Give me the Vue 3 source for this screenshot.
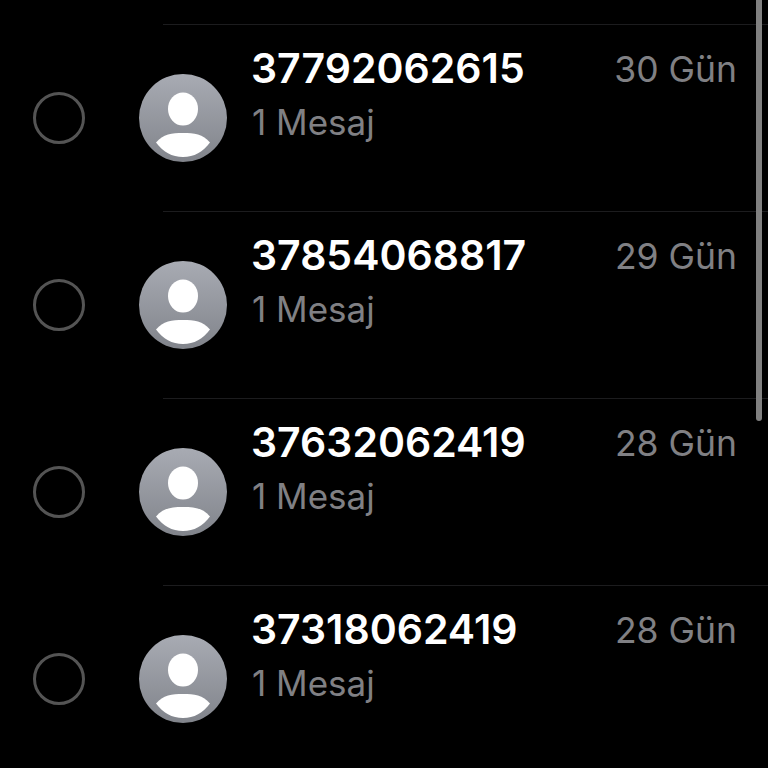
<template>
  <div class="screen">
    <div class="list">
      <div v-for="item in items" :key="item.id" class="row">
        <div class="select">
          <span class="radio"></span>
        </div>
        <div class="content">
          <div class="avatar-col">
            <svg class="avatar" viewBox="0 0 88 88">
              <defs>
                <linearGradient id="avatarBg" x1="0" y1="0" x2="0" y2="1">
                  <stop offset="0" stop-color="#a8abb3" />
                  <stop offset="1" stop-color="#81848b" />
                </linearGradient>
              </defs>
              <circle cx="44" cy="44" r="44" fill="url(#avatarBg)" />
              <ellipse cx="44" cy="35" rx="15" ry="16.5" fill="#fff" />
              <path d="M17 68.5C24 60 33 59 44 59C55 59 64 60 71 68.5C64 78 55 83 44 83C33 83 24 78 17 68.5Z" fill="#fff" />
            </svg>
          </div>
          <div class="texts">
            <div class="top">
              <span class="number">{{ item.number }}</span>
              <span class="age">{{ item.age }}</span>
            </div>
            <div class="count">1 Mesaj</div>
          </div>
        </div>
      </div>
    </div>
    <div class="scrollbar"></div>
  </div>
</template>

<script setup>
const items = [
  { id: 1, number: '37792062615', age: '30 Gün' },
  { id: 2, number: '37854068817', age: '29 Gün' },
  { id: 3, number: '37632062419', age: '28 Gün' },
  { id: 4, number: '37318062419', age: '28 Gün' }
]
</script>

<style>
html,
body {
  margin: 0;
  background: #000;
}
</style>

<style scoped>
.screen {
  position: relative;
  width: 768px;
  height: 768px;
  overflow: hidden;
  background: #000;
  font-family: Inter, "Liberation Sans", sans-serif;
}

.list {
  padding-top: 24px;
}

.row {
  display: flex;
  height: 187px;
}

.select {
  width: 163px;
  flex: none;
}

.radio {
  display: block;
  box-sizing: border-box;
  width: 52px;
  height: 52px;
  margin: 68px 0 0 33px;
  border: 3px solid #545454;
  border-radius: 50%;
}

.content {
  flex: 1;
  display: flex;
  border-top: 1px solid #1c1c1e;
}

.avatar-col {
  width: 89px;
  flex: none;
}

.avatar {
  display: block;
  width: 88px;
  height: 88px;
  margin: 49px 0 0 -24px;
}

.texts {
  flex: 1;
  margin-left: -1px;
  padding: 18px 31px 0 0;
}

.top {
  display: flex;
  justify-content: space-between;
  align-items: flex-start;
}

.number {
  color: #fff;
  font-size: 41px;
  line-height: 50px;
  font-weight: 600;
  letter-spacing: 0;
}

.age {
  margin-top: 2px;
  color: #808084;
  font-size: 35.5px;
  line-height: 50px;
}

.count {
  margin-top: 2px;
  padding-left: 1px;
  color: #808084;
  font-size: 35px;
  line-height: 50px;
}

.scrollbar {
  position: absolute;
  top: -10px;
  right: 6px;
  width: 6px;
  height: 431px;
  border-radius: 3px;
  background: #808080;
}
</style>
